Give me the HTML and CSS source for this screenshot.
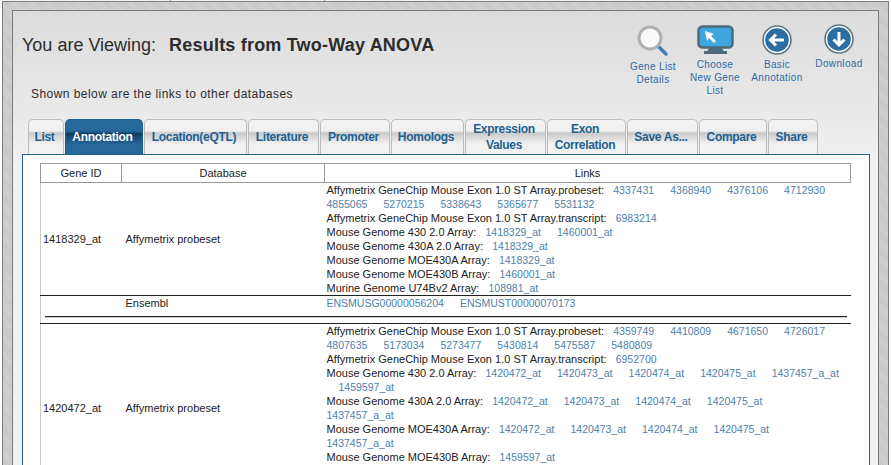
FILE: index.html
```html
<!DOCTYPE html>
<html lang="en">
<head>
  <meta charset="UTF-8" />
  <title>Results from Two-Way ANOVA</title>
  <link rel="stylesheet" href="styles.css">
</head>
<body>
  <div class="top-tabs"><span class="top-tab"></span><span class="top-tab wide"></span></div>
  <div class="frame">
    <div class="panel">
      <div class="head">
        <div class="head-text">
          <h1>You are Viewing: <b>Results from Two-Way ANOVA</b></h1>
          <p class="note">Shown below are the links to other databases</p>
        </div>
        <div class="actions">
          <a class="action act-details" href="#">
            <svg width="34" height="32" viewBox="0 0 34 32">
              <path d="M22 21 L30 29" stroke="#3f7fb5" stroke-width="3.5" stroke-linecap="round"/>
              <circle cx="14" cy="13" r="11" fill="#fafafa" stroke="#b0b0b0" stroke-width="3"/>
            </svg>
            <span>Gene List Details</span>
          </a>
          <a class="action" href="#">
            <svg width="37" height="30" viewBox="0 0 37 30">
              <rect x="1.500" y="1.500" width="34" height="21" rx="4" fill="#3fa6e0" stroke="#4d6b78" stroke-width="2.500"/>
              <path d="M12 23h13l2 4H10z" fill="#4d6b78"/>
              <rect x="7" y="26" width="23" height="3" fill="#4d6b78"/>
              <path d="M8 6l9 3-3 2 5 5-2 2-5-5-2 3z" fill="#fff"/>
            </svg>
            <span>Choose New Gene List</span>
          </a>
          <a class="action" href="#">
            <svg width="30" height="30" viewBox="0 0 30 30">
              <circle cx="15" cy="15" r="14" fill="#fff" stroke="#5f7a86" stroke-width="1.600"/>
              <circle cx="15" cy="15" r="11.800" fill="#2b6ea3"/>
              <path d="M22 15H9M14 9.500L8.500 15l5.500 5.500" fill="none" stroke="#fff" stroke-width="3"/>
            </svg>
            <span>Basic Annotation</span>
          </a>
          <a class="action act-download" href="#">
            <svg width="30" height="30" viewBox="0 0 30 30">
              <circle cx="15" cy="15" r="14" fill="#fff" stroke="#5f7a86" stroke-width="1.600"/>
              <circle cx="15" cy="15" r="11.800" fill="#2b6ea3"/>
              <path d="M15 8v13M9.500 15.500L15 21l5.500-5.500" fill="none" stroke="#fff" stroke-width="3"/>
            </svg>
            <span>Download</span>
          </a>
        </div>
      </div>

      <ul class="tabs">
        <li class="tab t-list">List</li>
        <li class="tab active t-annot">Annotation</li>
        <li class="tab t-loc">Location(eQTL)</li>
        <li class="tab t-lit">Literature</li>
        <li class="tab t-prom">Promoter</li>
        <li class="tab t-homo">Homologs</li>
        <li class="tab t-expr">Expression<br>Values</li>
        <li class="tab t-exon">Exon<br>Correlation</li>
        <li class="tab t-save">Save As...</li>
        <li class="tab t-comp">Compare</li>
        <li class="tab t-share">Share</li>
      </ul>

      <div class="content">
        <table class="results">
          <thead>
            <tr><th class="c-gene">Gene ID</th><th class="c-db">Database</th><th>Links</th></tr>
          </thead>
          <tbody>
            <tr>
              <td>1418329_at</td>
              <td>Affymetrix probeset</td>
              <td class="links">
                <div>Affymetrix GeneChip Mouse Exon 1.0 ST Array.probeset:&nbsp;&nbsp; <a href="#">4337431</a> <a href="#">4368940</a> <a href="#">4376106</a> <a href="#">4712930</a> <a href="#">4855065</a> <a href="#">5270215</a> <a href="#">5338643</a> <a href="#">5365677</a> <a href="#">5531132</a></div>
                <div>Affymetrix GeneChip Mouse Exon 1.0 ST Array.transcript:&nbsp;&nbsp; <a href="#">6983214</a></div>
                <div>Mouse Genome 430 2.0 Array:&nbsp;&nbsp; <a href="#">1418329_at</a> <a href="#">1460001_at</a></div>
                <div>Mouse Genome 430A 2.0 Array:&nbsp;&nbsp; <a href="#">1418329_at</a></div>
                <div>Mouse Genome MOE430A Array:&nbsp;&nbsp; <a href="#">1418329_at</a></div>
                <div>Mouse Genome MOE430B Array:&nbsp;&nbsp; <a href="#">1460001_at</a></div>
                <div>Murine Genome U74Bv2 Array:&nbsp;&nbsp; <a href="#">108981_at</a></div>
              </td>
            </tr>
            <tr class="ensembl">
              <td></td>
              <td>Ensembl</td>
              <td class="links"><a href="#">ENSMUSG00000056204</a> <a href="#">ENSMUST00000070173</a></td>
            </tr>
            <tr class="sep">
              <td colspan="3"><hr></td>
            </tr>
            <tr class="probes-long">
              <td>1420472_at</td>
              <td>Affymetrix probeset</td>
              <td class="links">
                <div>Affymetrix GeneChip Mouse Exon 1.0 ST Array.probeset:&nbsp;&nbsp; <a href="#">4359749</a> <a href="#">4410809</a> <a href="#">4671650</a> <a href="#">4726017</a> <a href="#">4807635</a> <a href="#">5173034</a> <a href="#">5273477</a> <a href="#">5430814</a> <a href="#">5475587</a> <a href="#">5480809</a></div>
                <div>Affymetrix GeneChip Mouse Exon 1.0 ST Array.transcript:&nbsp;&nbsp; <a href="#">6952700</a></div>
                <div>Mouse Genome 430 2.0 Array:&nbsp;&nbsp; <a href="#">1420472_at</a> <a href="#">1420473_at</a> <a href="#">1420474_at</a> <a href="#">1420475_at</a> <a class="line-end" href="#">1437457_a_at</a> <a class="indent" href="#">1459597_at</a></div>
                <div>Mouse Genome 430A 2.0 Array:&nbsp;&nbsp; <a href="#">1420472_at</a> <a href="#">1420473_at</a> <a href="#">1420474_at</a> <a href="#">1420475_at</a> <a href="#">1437457_a_at</a></div>
                <div>Mouse Genome MOE430A Array:&nbsp;&nbsp; <a href="#">1420472_at</a> <a href="#">1420473_at</a> <a href="#">1420474_at</a> <a href="#">1420475_at</a> <a href="#">1437457_a_at</a></div>
                <div>Mouse Genome MOE430B Array:&nbsp;&nbsp; <a href="#">1459597_at</a></div>
              </td>
            </tr>
          </tbody>
        </table>
      </div>
    </div>
  </div>
</body>
</html>
```

FILE: styles.css
```css
html, body {
  margin: 0;
  height: 465px;
  overflow: hidden;
  background: #fff;
  font-family: "Liberation Sans", Arial, sans-serif;
  font-size: 11px;
  color: #222;
}

.top-tabs {
  display: flex;
  height: 1px;
  padding-left: 20px;
  gap: 1px;
  background: #f4f4f4;
  width: 760px;
}

.top-tab {
  width: 150px;
  border-right: 1px solid #999;
}

.top-tab.wide {
  width: 152px;
}

.frame {
  margin: 0 2px;
  height: 464px;
  box-sizing: border-box;
  border: 1px solid #7c7c7c;
  border-bottom: none;
  padding: 8px 9px 0;
  background: repeating-linear-gradient(45deg, #c6c6c6, #c6c6c6 1px, #d2d2d2 1px, #d2d2d2 2px);
}

.panel {
  height: 600px;
  box-sizing: border-box;
  border: 1px solid #7c7c7c;
  padding: 0 8px 0 9px;
  background: linear-gradient(#dcdcdc 0, #e9e9e9 100px, #f1f1f1 150px);
}

.head {
  display: flex;
  justify-content: space-between;
  height: 108px;
}

h1 {
  margin: 0;
  padding-top: 24px;
  font-size: 18px;
  line-height: 20px;
  font-weight: normal;
  color: #2c2c2c;
}

h1 b {
  margin-left: 8px;
  letter-spacing: 0.2px;
}

.note {
  margin: 32px 0 0 9px;
  font-size: 12px;
  line-height: 14px;
  letter-spacing: 0.45px;
  color: #2c2c2c;
}

.actions {
  display: flex;
  align-items: flex-start;
  padding-top: 14px;
}

.action {
  width: 62px;
  display: flex;
  flex-direction: column;
  align-items: center;
  text-align: center;
  text-decoration: none;
  font-size: 10px;
  line-height: 13px;
  letter-spacing: 0.35px;
  color: #2f6aa6;
}

.action span {
  max-width: 56px;
}

.action svg {
  display: block;
  margin-bottom: 3px;
  height: 30px;
}

.act-details svg {
  height: 32px;
  margin-bottom: 3px;
}

.act-download {
  margin-top: -1px;
}

.tabs {
  display: flex;
  gap: 1px;
  list-style: none;
  margin: 0;
  padding: 0 0 0 6px;
  height: 35px;
}

.tab {
  box-sizing: border-box;
  height: 35px;
  padding-right: 3px;
  display: flex;
  align-items: center;
  justify-content: center;
  text-align: center;
  border: 1px solid #bdbdbd;
  border-bottom: none;
  border-radius: 5px 5px 0 0;
  font-size: 12px;
  line-height: 16px;
  font-weight: bold;
  letter-spacing: -0.3px;
  color: #21608f;
  background: linear-gradient(#f3f3f3 0, #f0f0f0 11px, #c9c9c9 13px, #dcdcdc 18px, #f2f2f2 24px, #f2f2f2 100%);
}

.tab.active {
  color: #fff;
  border-color: #1f5f8f;
  background: linear-gradient(#27689b 0, #27689b 11px, #0e3c62 14px, #17507f 18px, #27689b 25px);
}

.t-list { width: 36px; }
.t-annot { width: 78px; }
.t-loc { width: 103px; }
.t-lit { width: 71px; }
.t-prom { width: 70px; }
.t-homo { width: 73px; }
.t-expr { width: 81px; }
.t-exon { width: 79px; }
.t-save { width: 71px; }
.t-comp { width: 68px; }
.t-share { width: 50px; }

.content {
  background: #fff;
  border: 1px solid #1f6491;
  height: 400px;
  padding: 8px 17px 0;
}

.results {
  width: 811px;
  border-collapse: collapse;
  table-layout: fixed;
  line-height: 14px;
  border-left: 1px solid #ccc;
}

.results th {
  height: 18px;
  padding: 0;
  font-weight: normal;
  border: 1px solid #999;
  color: #222;
}

.c-gene { width: 80px; }
.c-db { width: 202px; }

.results td {
  padding: 0 2px;
  vertical-align: middle;
}

.results td:nth-child(2) {
  padding-left: 4px;
}

.links a {
  margin-right: 13px;
  font-size: 10.5px;
  color: #4f7fab;
  text-decoration: none;
}

.links .indent {
  margin-left: 12px;
}

.links .line-end {
  margin-right: 0;
}

.results .ensembl td {
  border-top: 1px solid #222;
  height: 15px;
  vertical-align: top;
}

.results .sep td {
  padding: 5px 0 0;
  height: 7px;
  border-bottom: 1px solid #222;
  vertical-align: top;
}

.sep hr {
  margin: 0 4px;
  height: 1px;
  border: none;
  background: #222;
  box-shadow: 0 1px 0 #ccc;
}

.results .probes-long .links {
  padding-bottom: 28px;
}
```
